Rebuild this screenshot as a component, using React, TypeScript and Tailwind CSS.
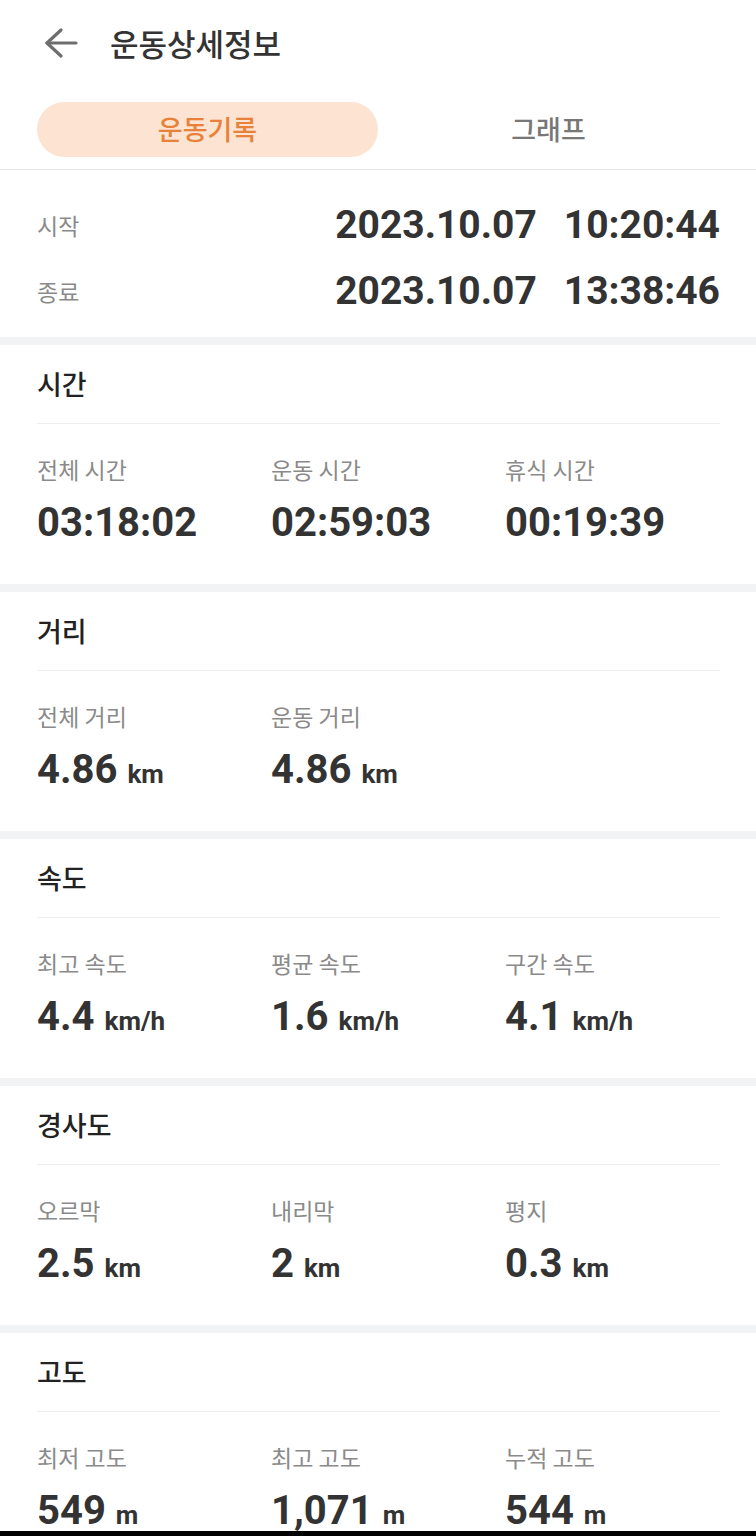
type Stat = { label: string; value: string; unit?: string };
type Section = { title: string; stats: Stat[] };

const sections: Section[] = [
  {
    title: "시간",
    stats: [
      { label: "전체 시간", value: "03:18:02" },
      { label: "운동 시간", value: "02:59:03" },
      { label: "휴식 시간", value: "00:19:39" },
    ],
  },
  {
    title: "거리",
    stats: [
      { label: "전체 거리", value: "4.86", unit: "km" },
      { label: "운동 거리", value: "4.86", unit: "km" },
    ],
  },
  {
    title: "속도",
    stats: [
      { label: "최고 속도", value: "4.4", unit: "km/h" },
      { label: "평균 속도", value: "1.6", unit: "km/h" },
      { label: "구간 속도", value: "4.1", unit: "km/h" },
    ],
  },
  {
    title: "경사도",
    stats: [
      { label: "오르막", value: "2.5", unit: "km" },
      { label: "내리막", value: "2", unit: "km" },
      { label: "평지", value: "0.3", unit: "km" },
    ],
  },
  {
    title: "고도",
    stats: [
      { label: "최저 고도", value: "549", unit: "m" },
      { label: "최고 고도", value: "1,071", unit: "m" },
      { label: "누적 고도", value: "544", unit: "m" },
    ],
  },
];

const num = "font-['Roboto','Liberation_Sans',sans-serif]";

function StatBlock({ s }: { s: Stat }) {
  return (
    <div className="flex flex-col">
      <span className="text-[23px] leading-[30px] text-[#8a8a8a]">{s.label}</span>
      <span className={`${num} mt-[17px] h-[44px] whitespace-nowrap text-[40px] font-bold leading-[44px] text-[#333]`}>
        {s.value}
        {s.unit ? <span className="ml-[10px] text-[26px] leading-[20px]">{s.unit}</span> : null}
      </span>
    </div>
  );
}

function SectionCard({ sec }: { sec: Section }) {
  return (
    <section className="bg-white px-[37px] pb-[39px]">
      <div className="mr-[-1px] border-b border-[#eeeeee] pt-[21px] pb-[21px]">
        <h2 className="text-[27px] font-medium leading-[36px] text-[#222]">{sec.title}</h2>
      </div>
      <div className="grid grid-cols-[234px_234px_234px] pt-[30px]">
        {sec.stats.map((s) => (
          <StatBlock key={s.label} s={s} />
        ))}
      </div>
    </section>
  );
}

function BackArrow() {
  return (
    <svg width="34" height="30" viewBox="0 0 34 30" fill="none" stroke="#6e6e6e" strokeWidth="3.2" strokeLinecap="round" strokeLinejoin="round">
      <path d="M3 15H32" />
      <path d="M17 2L3 15L17 28" />
    </svg>
  );
}

function DateRow({ label, date, time }: { label: string; date: string; time: string }) {
  return (
    <div className="flex h-[44px] items-center justify-between">
      <span className="text-[23px] text-[#8a8a8a]">{label}</span>
      <span className={`${num} flex gap-[27px] text-[39px] font-bold leading-[44px] text-[#333]`}>
        <span>{date}</span>
        <span>{time}</span>
      </span>
    </div>
  );
}

export default function App() {
  return (
    <div className="flex min-h-[1536px] w-[756px] flex-col bg-[#f2f3f5] font-['Noto_Sans_CJK_KR','Noto_Sans',sans-serif]">
      <header className="flex h-[86px] items-center bg-white pl-[44px]">
        <BackArrow />
        <h1 className="ml-[32px] text-[31px] font-medium text-[#333]">운동상세정보</h1>
      </header>
      <div className="flex h-[84px] items-start border-b border-[#e6e6e6] bg-white px-[37px] pt-[16px]">
        <button
          type="button"
          className="flex h-[55px] w-[341px] items-center justify-center rounded-full bg-[#fde3d1] text-[27px] font-medium text-[#e8823b]"
        >
          운동기록
        </button>
        <button
          type="button"
          className="flex h-[55px] flex-1 items-center justify-center text-[27px] font-medium text-[#777]"
        >
          그래프
        </button>
      </div>
      <div className="flex flex-col gap-[22px] bg-white pl-[37px] pr-[36px] pt-[33px] pb-[24px]">
        <DateRow label="시작" date="2023.10.07" time="10:20:44" />
        <DateRow label="종료" date="2023.10.07" time="13:38:46" />
      </div>
      <div className="mt-[8px] flex flex-col gap-[8px]">
        {sections.map((sec) => (
          <SectionCard key={sec.title} sec={sec} />
        ))}
      </div>
      <div className="fixed bottom-0 left-0 h-[5px] w-full bg-black" />
    </div>
  );
}
